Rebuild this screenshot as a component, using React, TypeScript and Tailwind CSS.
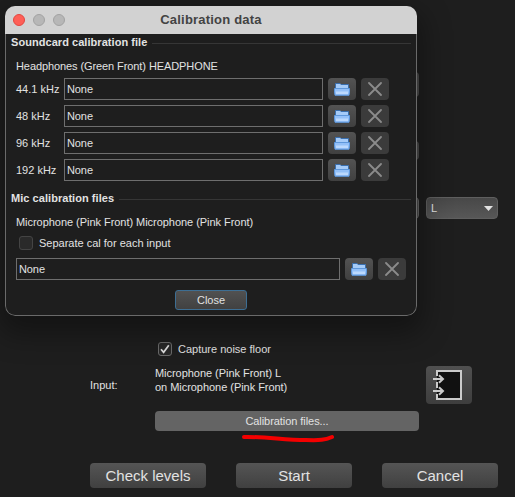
const rates = ["44.1 kHz", "48 kHz", "96 kHz", "192 kHz"];

function FolderIcon() {
  return (
    <svg width="16" height="14" viewBox="0 0 16 14">
      <path d="M1.500 7V1.500h4.500l1 1H14.500v5z" fill="#a5cbf8" stroke="#3a6fae" />
      <path d="M.5 6.500h15v3.500l-.5 3.300H1l-.5-3.300z" fill="#93c0f8" stroke="#5e98dc" />
      <path d="M2 9.500h12V12H2z" fill="#bcd9fd" />
    </svg>
  );
}

function FileField({ inputClass }: { inputClass: string }) {
  return (
    <div className="flex">
      <div className={`h-[22px] border border-[#6e6e6e] pl-[2px] leading-[20px] tracking-[-0.1px] ${inputClass}`}>
        None
      </div>
      <button className="ml-[5px] flex h-[22px] w-7 items-center justify-center rounded-[4px] bg-linear-to-b from-[#535353] to-[#404040]">
        <FolderIcon />
      </button>
      <button className="ml-[5px] flex h-[22px] w-7 items-center justify-center rounded-[4px] bg-[#3b3b3b]">
        <svg width="14" height="14" viewBox="0 0 14 14" stroke="#8b8b8b" strokeWidth="1.8" strokeLinecap="round">
          <path d="M1 1l12 12M13 1L1 13" />
        </svg>
      </button>
    </div>
  );
}

function SectionTitle({ title }: { title: string }) {
  return (
    <div className="flex h-4 items-center gap-[5px] px-[5px]">
      <h2 className="font-bold tracking-[0.05px] whitespace-nowrap">{title}</h2>
      <div className="mt-[3px] h-px flex-1 bg-[#363636]" />
    </div>
  );
}

function CalibrationDialog() {
  return (
    <div className="absolute left-[5px] top-[6px] flex h-[310px] w-[412px] flex-col overflow-hidden rounded-[10px] bg-[#1e1e1e] shadow-[0_12px_28px_6px_rgba(0,0,0,0.35)]">
      {/* Title bar */}
      <div className="flex h-7 shrink-0 items-center gap-2 bg-[#d2d2d2] pl-2">
        <span className="size-3 rounded-full border border-[#e2463f] bg-[#fe5f57]" />
        <span className="size-3 rounded-full border border-[#a2a2a2] bg-[#b7b7b7]" />
        <span className="size-3 rounded-full border border-[#a2a2a2] bg-[#b7b7b7]" />
        <h1 className="flex-1 pr-[68px] text-center text-[13px] leading-7 font-bold tracking-[0.2px] text-[#434343]">
          Calibration data
        </h1>
      </div>

      <div className="flex-1 rounded-b-[10px] border border-t-0 border-[#6a6a6a]">
        {/* Soundcard */}
        <SectionTitle title="Soundcard calibration file" />
        <p className="mt-2 pl-[10px] leading-4 tracking-[-0.09px]">Headphones (Green Front) HEADPHONE</p>
        <div className="mt-1 flex flex-col gap-[5px] pl-[10px]">
          {rates.map((rate) => (
            <div key={rate} className="flex">
              <span className="w-12 leading-[22px] whitespace-nowrap">{rate}</span>
              <FileField inputClass="w-[259px]" />
            </div>
          ))}
        </div>

        {/* Microphone */}
        <div className="mt-[9px]">
          <SectionTitle title="Mic calibration files" />
        </div>
        <p className="mt-2 pl-[10px] leading-4 tracking-[-0.04px]">Microphone (Pink Front) Microphone (Pink Front)</p>
        <div className="mt-[5px] flex h-4 items-center pl-[13px]">
          <span className="size-[14px] rounded-[3px] border border-[#444] bg-[#2a2a2a]" />
          <span className="ml-[6px]">Separate cal for each input</span>
        </div>
        <div className="mt-[7px] pl-[10px]">
          <FileField inputClass="w-[324px]" />
        </div>
        <button className="mx-auto mt-[10px] block h-5 w-[72px] rounded-[3px] border border-[#3d6e93] bg-linear-to-b from-[#515151] to-[#414141] leading-[18px]">
          Close
        </button>
      </div>
    </div>
  );
}

export default function App() {
  return (
    <div className="relative h-[497px] w-[515px] overflow-hidden bg-[#1e1e1e] font-['Liberation_Sans',sans-serif] text-[11px] text-[#e2e2e2]">
      {/* Measurement form */}
      <div className="flex flex-col pt-[72px]">
        <div className="ml-[155px] h-[25px] w-[264px] rounded-[4px] bg-[#4b4b4b]" />
        <div className="mt-11 ml-[155px] h-[19px] w-[264px] rounded-[4px] bg-[#4b4b4b]" />
        <div className="mt-[37px] ml-[155px] flex gap-[7px]">
          <div className="h-[22px] w-[264px] rounded-[4px] border border-[#666] bg-[#4b4b4b]" />
          <div className="flex h-[22px] w-[72px] items-center justify-between rounded-[4px] border border-[#5f5f5f] bg-linear-to-b from-[#484848] to-[#575757] px-1">
            <span>L</span>
            <svg width="9" height="5" viewBox="0 0 9 5" fill="#e2e2e2">
              <path d="M0 0h9L4.500 5z" />
            </svg>
          </div>
        </div>

        <div className="mt-[122px] ml-[158px] flex h-4 items-center">
          <span className="flex size-[14px] items-center justify-center rounded-[3px] border border-[#6b6b6b] bg-[#282828]">
            <svg width="10" height="10" viewBox="0 0 10 10" fill="none" stroke="#dedede" strokeWidth="1.700">
              <path d="M1 5.300l2.600 3L8.800 1.200" />
            </svg>
          </span>
          <span className="ml-[6px]">Capture noise floor</span>
        </div>

        <div className="mt-[9px] flex h-[38px] pl-[90px]">
          <span className="w-[65px] pt-3 leading-[14px]">Input:</span>
          <p className="w-[271px] leading-[14px] tracking-[-0.04px]">
            Microphone (Pink Front) L
            <br />
            on Microphone (Pink Front)
          </p>
          <button className="flex h-[38px] w-[46px] items-center rounded-[4px] bg-linear-to-b from-[#505050] to-[#3e3e3e] pl-[7px]">
            <svg width="30" height="30" viewBox="0 0 30 30" fill="none" stroke="#cbcbcb" strokeWidth="2">
              <path d="M4 1h24v28H4z" fill="#111" stroke="none" />
              <path d="M4 6V1h24v28H4v-5M4 12v6" />
              <path d="M0 9h10M6 5.200L10 9l-4 3.800M0 21h10M6 17.200l4 3.800-4 3.800" />
            </svg>
          </button>
        </div>

        <button className="mt-[7px] ml-[155px] h-5 w-[264px] rounded-[4px] bg-[#646464] leading-5 tracking-[-0.06px]">
          Calibration files...
        </button>

        <div className="mt-8 ml-[90px] flex gap-[30px] text-[15px] leading-[25px]">
          <button className="h-[25px] w-[116px] rounded-[4px] bg-linear-to-b from-[#555] to-[#404040]">Check levels</button>
          <button className="h-[25px] w-[116px] rounded-[4px] bg-linear-to-b from-[#555] to-[#404040]">Start</button>
          <button className="h-[25px] w-[116px] rounded-[4px] bg-linear-to-b from-[#555] to-[#404040]">Cancel</button>
        </div>
      </div>

      {/* Red marker stroke */}
      <svg className="absolute left-[240px] top-[430px]" width="98" height="16" viewBox="0 0 98 16" fill="none">
        <path d="M4 7C27 6.500 43 10 66 10C80 10.500 85 10 92 7" stroke="#f40000" strokeWidth="4" strokeLinecap="round" />
      </svg>

      <CalibrationDialog />
    </div>
  );
}
